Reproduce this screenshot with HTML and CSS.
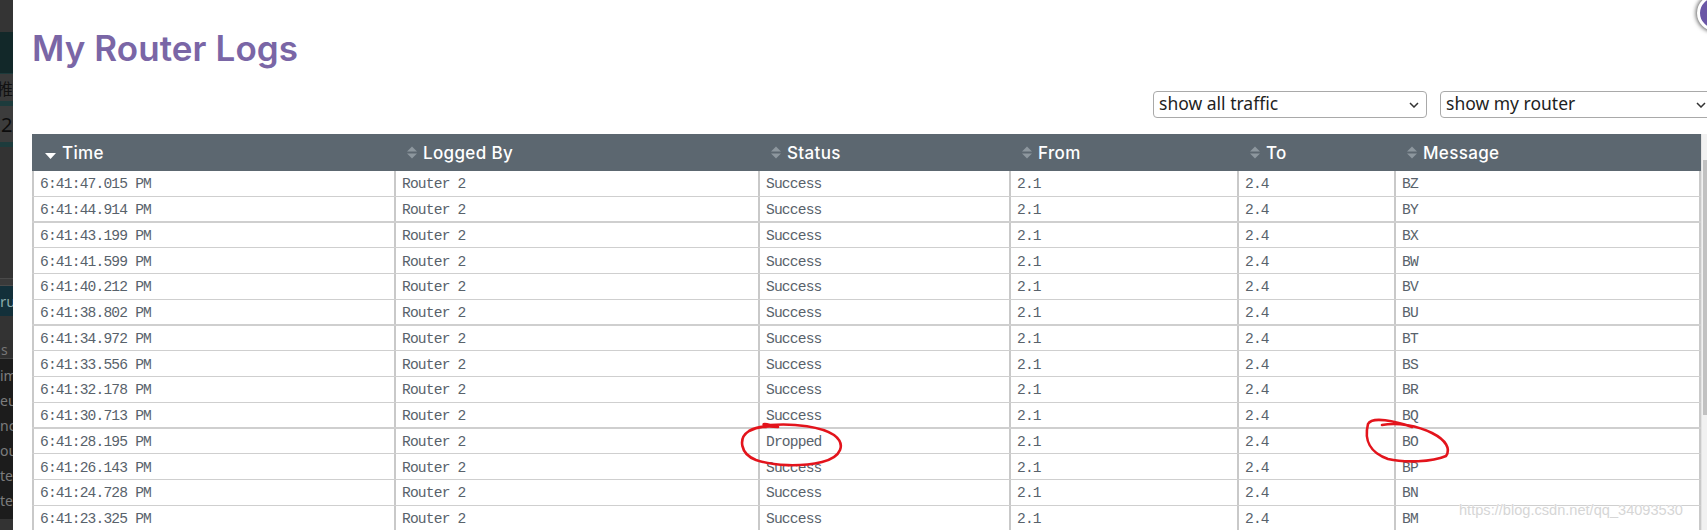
FILE: index.html
```html
<!DOCTYPE html>
<html lang="en">
<head>
<meta charset="utf-8">
<title>My Router Logs</title>
<link rel="stylesheet" href="styles.css">
</head>
<body>
<div class="screen">
  <aside class="backdrop">
    <div class="bd bd-top"></div>
    <div class="bd bd-teal"></div>
    <div class="bd bd-cjk"><span>推</span></div>
    <div class="bd bd-line"></div>
    <div class="bd bd-num"><span>2</span></div>
    <div class="bd bd-line"></div>
    <div class="bd bd-gap"></div>
    <div class="bd bd-rule"></div>
    <div class="bd bd-band"><span>ru</span></div>
    <div class="bd bd-gap2"></div>
    <div class="bd bd-s"><span>s</span></div>
    <div class="bd bd-list">
      <span>im</span><span>eu</span><span>nc</span><span>ou</span><span>te</span><span>te</span>
    </div>
  </aside>

  <main class="modal">
    <div class="close-btn"></div>
    <h1 class="title">My Router Logs</h1>

    <div class="filters">
      <div class="select"><span>show all traffic</span><svg class="chev" width="10" height="6" viewBox="0 0 10 6"><path d="M1 1 L5 5 L9 1" fill="none" stroke="#333" stroke-width="1.5"/></svg></div>
      <div class="select"><span>show my router</span><svg class="chev" width="10" height="6" viewBox="0 0 10 6"><path d="M1 1 L5 5 L9 1" fill="none" stroke="#333" stroke-width="1.5"/></svg></div>
    </div>

    <div class="grid-wrap">
      <div class="logs">
        <div class="row head">
          <div class="th first"><svg class="caret" width="11" height="6" viewBox="0 0 11 6"><polygon points="0,0 11,0 5.5,6" fill="#fff"/></svg>Time</div>
          <div class="th"><svg class="sort" width="10" height="13" viewBox="0 0 10 13"><polygon points="0,5.5 5,0.5 10,5.5" /><polygon points="0,7.5 10,7.5 5,12.5"/></svg>Logged By</div>
          <div class="th"><svg class="sort" width="10" height="13" viewBox="0 0 10 13"><polygon points="0,5.5 5,0.5 10,5.5" /><polygon points="0,7.5 10,7.5 5,12.5"/></svg>Status</div>
          <div class="th"><svg class="sort" width="10" height="13" viewBox="0 0 10 13"><polygon points="0,5.5 5,0.5 10,5.5" /><polygon points="0,7.5 10,7.5 5,12.5"/></svg>From</div>
          <div class="th"><svg class="sort" width="10" height="13" viewBox="0 0 10 13"><polygon points="0,5.5 5,0.5 10,5.5" /><polygon points="0,7.5 10,7.5 5,12.5"/></svg>To</div>
          <div class="th"><svg class="sort" width="10" height="13" viewBox="0 0 10 13"><polygon points="0,5.5 5,0.5 10,5.5" /><polygon points="0,7.5 10,7.5 5,12.5"/></svg>Message</div>
        </div>
        <div class="row"><div class="td">6:41:47.015 PM</div><div class="td">Router 2</div><div class="td">Success</div><div class="td">2.1</div><div class="td">2.4</div><div class="td last">BZ</div></div>
        <div class="row"><div class="td">6:41:44.914 PM</div><div class="td">Router 2</div><div class="td">Success</div><div class="td">2.1</div><div class="td">2.4</div><div class="td last">BY</div></div>
        <div class="row"><div class="td">6:41:43.199 PM</div><div class="td">Router 2</div><div class="td">Success</div><div class="td">2.1</div><div class="td">2.4</div><div class="td last">BX</div></div>
        <div class="row"><div class="td">6:41:41.599 PM</div><div class="td">Router 2</div><div class="td">Success</div><div class="td">2.1</div><div class="td">2.4</div><div class="td last">BW</div></div>
        <div class="row"><div class="td">6:41:40.212 PM</div><div class="td">Router 2</div><div class="td">Success</div><div class="td">2.1</div><div class="td">2.4</div><div class="td last">BV</div></div>
        <div class="row"><div class="td">6:41:38.802 PM</div><div class="td">Router 2</div><div class="td">Success</div><div class="td">2.1</div><div class="td">2.4</div><div class="td last">BU</div></div>
        <div class="row"><div class="td">6:41:34.972 PM</div><div class="td">Router 2</div><div class="td">Success</div><div class="td">2.1</div><div class="td">2.4</div><div class="td last">BT</div></div>
        <div class="row"><div class="td">6:41:33.556 PM</div><div class="td">Router 2</div><div class="td">Success</div><div class="td">2.1</div><div class="td">2.4</div><div class="td last">BS</div></div>
        <div class="row"><div class="td">6:41:32.178 PM</div><div class="td">Router 2</div><div class="td">Success</div><div class="td">2.1</div><div class="td">2.4</div><div class="td last">BR</div></div>
        <div class="row"><div class="td">6:41:30.713 PM</div><div class="td">Router 2</div><div class="td">Success</div><div class="td">2.1</div><div class="td">2.4</div><div class="td last">BQ</div></div>
        <div class="row"><div class="td">6:41:28.195 PM</div><div class="td">Router 2</div><div class="td">Dropped</div><div class="td">2.1</div><div class="td">2.4</div><div class="td last">BO</div></div>
        <div class="row"><div class="td">6:41:26.143 PM</div><div class="td">Router 2</div><div class="td">Success</div><div class="td">2.1</div><div class="td">2.4</div><div class="td last">BP</div></div>
        <div class="row"><div class="td">6:41:24.728 PM</div><div class="td">Router 2</div><div class="td">Success</div><div class="td">2.1</div><div class="td">2.4</div><div class="td last">BN</div></div>
        <div class="row"><div class="td">6:41:23.325 PM</div><div class="td">Router 2</div><div class="td">Success</div><div class="td">2.1</div><div class="td">2.4</div><div class="td last">BM</div></div>
      </div>
      <div class="scrollbar"><div class="thumb"></div></div>
    </div>
  </main>
</div>

<svg class="annotations" width="1707" height="530" viewBox="0 0 1707 530">
  <path d="M766 427 C 762 424, 763 423, 770 425 C 795 423, 822 427, 834 435 C 846 444, 842 457, 822 462 C 800 467, 774 466, 756 460 C 740 454, 738 438, 749 431 C 758 426, 770 426, 778 427" fill="none" stroke="#e3141c" stroke-width="2.6" stroke-linecap="round"/>
  <path d="M1412 427 C 1395 421, 1372 416, 1368 424 C 1364 440, 1370 453, 1388 459 C 1405 463, 1432 462, 1446 456 C 1451 449, 1446 440, 1432 433 C 1418 426, 1398 422, 1382 425" fill="none" stroke="#e3141c" stroke-width="2.6" stroke-linecap="round"/>
</svg>
<div class="watermark">https://blog.csdn.net/qq_34093530</div>
</body>
</html>
```

FILE: styles.css
```css
html, body {
  margin: 0;
  padding: 0;
  width: 1707px;
  height: 530px;
  overflow: hidden;
  background: #fff;
}

.screen {
  display: flex;
  width: 1707px;
  height: 530px;
  overflow: hidden;
}

/* ---------- dimmed page behind the modal ---------- */
.backdrop {
  flex: 0 0 13px;
  width: 13px;
  display: flex;
  flex-direction: column;
  background: #333333;
  overflow: hidden;
  font-family: "Noto Sans", "Noto Sans CJK SC", sans-serif;
}
.bd { display: flex; justify-content: flex-start; overflow: hidden; flex: none; }
.bd-top { height: 32px; background: #343434; }
.bd-teal { height: 42px; background: #122829; border-bottom: 1px solid #1d3a3b; box-sizing: border-box; }
.bd-cjk { height: 27px; background: #3a3a3a; align-items: center; }
.bd-cjk span { color: #111; font-size: 16px; white-space: nowrap; margin-left: -3px; }
.bd-line { height: 5px; background: #1d3b3c; }
.bd-num { height: 36px; background: #3c3c3c; align-items: center; }
.bd-num span { color: #0c0c0c; font-size: 20px; white-space: nowrap; margin-left: 1px; }
.bd-gap { height: 131px; background: #333; }
.bd-rule { height: 8px; background: #3a3a3a; border-top: 1px solid #4a4a4a; border-bottom: 1px solid #4a4a4a; box-sizing: border-box; }
.bd-band { height: 30px; background: #13303a; align-items: center; }
.bd-band span { color: #8aa; font-size: 15px; white-space: nowrap; margin-left: 0; }
.bd-gap2 { height: 24px; background: #333; }
.bd-s { height: 19px; background: #303030; align-items: center; border-bottom: 1px solid #444; box-sizing: border-box; }
.bd-s span { color: #777; font-size: 14px; white-space: nowrap; margin-left: 1px; }
.bd-list {
  height: 160px;
  background: #1c1c1c;
  flex-direction: column;
  align-items: flex-start;
  padding-top: 4px;
  box-sizing: border-box;
}
.bd-list span {
  display: block;
  height: 25px;
  line-height: 25px;
  color: #7c7c7c;
  font-size: 14px;
  white-space: nowrap;
  margin-left: 0;
}

/* ---------- modal ---------- */
.modal {
  position: relative;
  flex: 0 0 1707px;
  width: 1707px;
  box-sizing: border-box;
  padding: 26px 2px 0 19px;
  background: #fff;
}

.close-btn {
  position: absolute;
  left: 1684px;
  top: -5px;
  width: 30px;
  height: 30px;
  border-radius: 50%;
  background: #6b57a6;
  border: 3px solid #fff;
  box-shadow: 0 0 4px 1px rgba(0, 0, 0, 0.65);
}

.title {
  margin: 0;
  font-family: Inter, "Open Sans", sans-serif;
  font-weight: 600;
  font-size: 35px;
  line-height: 44px;
  color: #7a66a6;
  letter-spacing: 0.1px;
}

.filters {
  display: flex;
  justify-content: flex-end;
  gap: 13px;
  margin-top: 21px;
  padding-right: 4px;
}

.select {
  width: 274px;
  height: 27px;
  box-sizing: border-box;
  border: 1px solid #a9a9a9;
  border-radius: 4px;
  display: flex;
  align-items: center;
  justify-content: space-between;
  padding: 0 7px 0 5px;
  font-family: "Noto Sans", "Open Sans", sans-serif;
  font-size: 17.5px;
  color: #1e1e1e;
  background: #fff;
}
.select span { line-height: 1; padding-bottom: 2px; }
.chev { flex: none; }

.grid-wrap {
  display: flex;
  margin-top: 16px;
}

.logs {
  flex: 0 0 1669px;
  width: 1669px;
}

.row {
  display: grid;
  grid-template-columns: 362px 364px 251px 228px 157px 1fr;
  height: 25.75px;
  box-sizing: border-box;
  border-bottom: 1px solid #cfcfcf;
}
.row:nth-child(4n+3) { border-bottom-width: 2px; }

.row.head {
  height: 37px;
  background: #5c6770;
  border-bottom: 0;
}

.th {
  display: flex;
  align-items: center;
  gap: 6px;
  padding-left: 13px;
  font-family: Inter, "Open Sans", sans-serif;
  font-weight: 500;
  font-size: 17px;
  letter-spacing: 0.35px;
  color: #fff;
}
.th.first { padding-left: 13px; gap: 6px; }
.sort { fill: #8d979e; flex: none; }
.caret { flex: none; margin-top: 6px; }

.td {
  display: flex;
  align-items: center;
  border-left: 2px solid #c9c9c9;
  padding: 2px 0 0 6px;
  font-family: "Liberation Mono", "DejaVu Sans Mono", monospace;
  font-size: 14.6px;
  letter-spacing: -0.83px;
  color: #58626b;
  white-space: nowrap;
  overflow: hidden;
}
.td.last { border-right: 2px solid #c9c9c9; }

.scrollbar {
  flex: 0 0 17px;
  height: 400px;
  background: #f1f1f1;
  border-left: 1px solid #e3e3e3;
  box-sizing: border-box;
}
.thumb {
  margin: 26px 0 0 1px;
  width: 9px;
  height: 255px;
  background: #c1c1c1;
}

/* ---------- overlays ---------- */
.annotations {
  position: absolute;
  left: 0;
  top: 0;
  pointer-events: none;
}

.watermark {
  position: absolute;
  left: 1459px;
  top: 501px;
  font-family: "Liberation Sans", Arial, sans-serif;
  font-size: 14.6px;
  line-height: 18px;
  color: #d6d6d6;
  text-shadow: 0 0 1px #fff, 0 0 1px #fff;
  white-space: nowrap;
}
```
